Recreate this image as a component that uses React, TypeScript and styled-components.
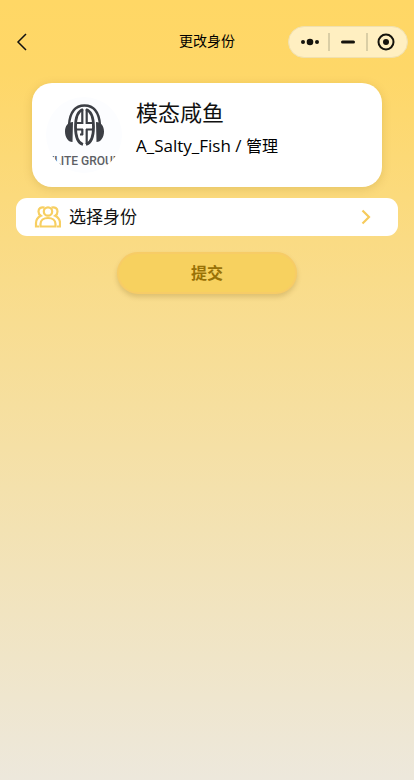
import React from "react";
import styled, { createGlobalStyle } from "styled-components";

const GlobalStyle = createGlobalStyle`
  * { box-sizing: border-box; }
  body {
    margin: 0;
    color: #111;
    font-family: "Open Sans", "Noto Sans CJK SC", sans-serif;
  }
  button { font-family: inherit; color: inherit; cursor: pointer; }
`;

const Page = styled.div`
  min-height: 100vh;
  background: linear-gradient(180deg, #ffd765 0, #fed768 72px, #ede8dc 100%);
`;

const NavBar = styled.header`
  display: grid;
  grid-template-columns: 1fr auto 1fr;
  align-items: center;
  padding: 26px 6px 8px;
`;

const BackButton = styled.button`
  display: flex;
  justify-self: start;
  padding: 4px 6px;
  border: 0;
  background: none;
`;

const Title = styled.h1`
  margin: 0;
  padding-bottom: 2px;
  font-size: 14px;
  line-height: 20px;
  font-weight: 400;
  color: #000;
`;

const Capsule = styled.div`
  display: flex;
  align-items: center;
  justify-self: end;
  width: 120px;
  height: 32px;
  padding: 0 3px;
  border: 1px solid #f0e0b0;
  border-radius: 16px;
  background: #ffefc1;
`;

const CapsuleButton = styled.button`
  display: flex;
  flex: 1;
  justify-content: center;
  padding: 0;
  border: 0;
  background: none;
`;

const Divider = styled.span`
  width: 2px;
  height: 18px;
  background: #dacea5;
`;

const Content = styled.main`
  display: flex;
  flex-direction: column;
  align-items: center;
  padding: 17px 16px 40px;
`;

const ProfileCard = styled.section`
  display: flex;
  align-self: stretch;
  gap: 14px;
  margin: 0 16px;
  padding: 12px 14px;
  border-radius: 20px;
  background: #fff;
  box-shadow: 0 2px 10px rgba(130, 95, 0, 0.18);
`;

const Avatar = styled.svg`
  flex: none;
  width: 76px;
  height: 76px;
  margin: 2px 0;
  border-radius: 50%;
`;

const ProfileText = styled.div`
  display: flex;
  flex-direction: column;
`;

const Name = styled.h2`
  margin: 0;
  font-size: 22px;
  line-height: 34px;
  font-weight: 400;
`;

const Account = styled.p`
  margin: 5px 0 0;
  font-size: 16px;
  line-height: 24px;
  color: #000;
`;

const Handle = styled.span`
  font-size: 17px;
`;

const PickerRow = styled.button`
  display: flex;
  align-items: center;
  align-self: stretch;
  gap: 8px;
  height: 38px;
  margin-top: 11px;
  padding: 0 24px 0 18px;
  border: 0;
  border-radius: 11px;
  background: #fff;
`;

const PickerLabel = styled.span`
  flex: 1;
  font-size: 17px;
  line-height: 24px;
  text-align: left;
`;

const SubmitButton = styled.button`
  width: 180px;
  height: 42px;
  margin-top: 16px;
  padding: 0;
  border: 2px solid #f7cc66;
  border-radius: 21px;
  background: #f7d15f;
  box-shadow: 0 3px 5px rgba(110, 80, 0, 0.2);
  color: #997207;
  font-size: 16px;
  line-height: 24px;
  font-weight: 700;
`;

function HeadphoneLogo() {
  return (
    <Avatar viewBox="2 2 76 76" role="img" aria-label="Elite Group">
      <rect width="80" height="80" fill="#fcfdff" />
      <path d="M25 30C26 16 32 10.500 40.500 10.500S55 16 56 30" fill="none" stroke="#3c3f45" strokeWidth="2.400" />
      <path
        d="M29 27c-5 0-8 4-8 9.500S24 47 28.500 47zM52 27c5 0 8 4 8 9.500S57 47 52.500 47z"
        fill="#3c3f45"
      />
      <ellipse cx="40.500" cy="32" rx="9.500" ry="18.500" fill="#fff" />
      <path
        d="M39 14.500C34 16 31.500 23 31.500 32S34 48 39 49.500M42 14.500C47 16 49.500 23 49.500 32S47 48 42 49.500"
        fill="none"
        stroke="#3c3f45"
        strokeWidth="2.800"
      />
      <path
        d="M38.300 14v15M32 28h7M32 34.500h7M38.300 34v6M36 39.500h3M42.700 14v15M42 28h7M42 34.500h7M42.700 34v15"
        fill="none"
        stroke="#3c3f45"
        strokeWidth="2.200"
      />
      <text
        x="40"
        y="70"
        textAnchor="middle"
        fontFamily="Roboto, sans-serif"
        fontSize="12"
        fontWeight="500"
        fill="#5c5f65"
      >
        ELITE GROUP
      </text>
    </Avatar>
  );
}

function PeopleIcon() {
  return (
    <svg width="27" height="22" viewBox="0 0 27 22" fill="none" stroke="#f7cf62" strokeWidth="2.200" aria-hidden="true">
      <circle cx="14" cy="5.500" r="4.200" />
      <path d="M6.500 20.500v-2.500c0-3.600 3-6 7.500-6s7.500 2.400 7.500 6v2.500z" />
      <path d="M10.500 1.600C7 .5 4.500 2.500 4.500 5.500c0 2 1 3.500 2.300 4.300C3.500 11.500 2 14 2 17v3.500h3" />
      <path d="M17.500 1.600C21 .5 23.500 2.500 23.500 5.500c0 2-1 3.500-2.300 4.300C24.500 11.500 26 14 26 17v3.500h-3" />
    </svg>
  );
}

export default function App() {
  return (
    <>
      <GlobalStyle />
      <Page>
        <NavBar>
          <BackButton aria-label="返回">
            <svg width="18" height="20" viewBox="0 0 18 20" fill="none" stroke="#111" strokeWidth="1.500">
              <path d="M14 2L6 10l8 8" />
            </svg>
          </BackButton>
          <Title>更改身份</Title>
          <Capsule>
            <CapsuleButton aria-label="更多">
              <svg width="20" height="8" viewBox="0 0 20 8" fill="#15130c">
                <circle cx="3" cy="4" r="2" />
                <circle cx="10" cy="4" r="3.300" />
                <circle cx="17" cy="4" r="2" />
              </svg>
            </CapsuleButton>
            <Divider />
            <CapsuleButton aria-label="最小化">
              <svg width="14" height="4" viewBox="0 0 14 4">
                <rect y="0.500" width="14" height="3" rx="1.500" fill="#15130c" />
              </svg>
            </CapsuleButton>
            <Divider />
            <CapsuleButton aria-label="关闭">
              <svg width="18" height="18" viewBox="0 0 18 18">
                <circle cx="9" cy="9" r="7.500" fill="none" stroke="#15130c" strokeWidth="2" />
                <circle cx="9" cy="9" r="3" fill="#15130c" />
              </svg>
            </CapsuleButton>
          </Capsule>
        </NavBar>
        <Content>
          <ProfileCard>
            <HeadphoneLogo />
            <ProfileText>
              <Name>模态咸鱼</Name>
              <Account>
                <Handle>A_Salty_Fish / </Handle>管理
              </Account>
            </ProfileText>
          </ProfileCard>
          <PickerRow type="button">
            <PeopleIcon />
            <PickerLabel>选择身份</PickerLabel>
            <svg width="16" height="16" viewBox="0 0 16 16" fill="none" stroke="#f6cb5c" strokeWidth="2.200" aria-hidden="true">
              <path d="M4.500 1.500L11 8l-6.500 6.500" />
            </svg>
          </PickerRow>
          <SubmitButton type="submit">提交</SubmitButton>
        </Content>
      </Page>
    </>
  );
}
